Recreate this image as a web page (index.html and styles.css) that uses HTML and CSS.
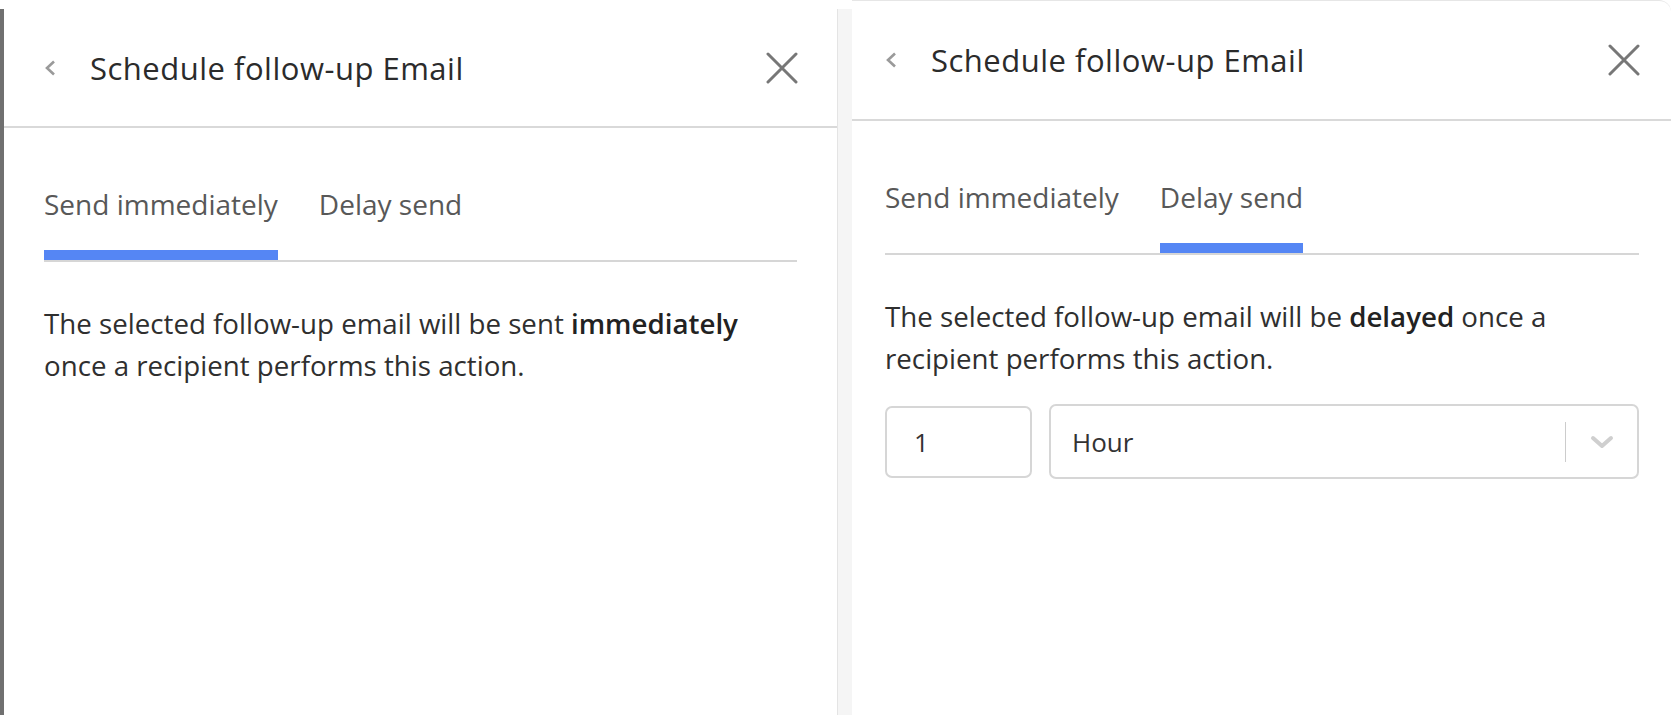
FILE: index.html
```html
<!DOCTYPE html>
<html lang="en">
<head>
<meta charset="utf-8">
<title>Schedule follow-up Email</title>
<link rel="stylesheet" href="styles.css">
</head>
<body>
<div class="desk">
  <section class="panel panel--first">
    <header class="panel-head">
      <button class="icon-btn back" aria-label="Back">
        <svg viewBox="0 0 12 16" width="12" height="16"><polyline points="10,1.5 3,8 10,14.5" fill="none" stroke="#9a9a9a" stroke-width="2.6"/></svg>
      </button>
      <h1 class="panel-title">Schedule follow-up Email</h1>
      <button class="icon-btn close" aria-label="Close">
        <svg viewBox="0 0 32 32" width="32" height="32"><path d="M2 2L30 30M30 2L2 30" stroke="#777" stroke-width="3" stroke-linecap="round"/></svg>
      </button>
    </header>
    <div class="panel-body">
      <nav class="tabs">
        <span class="tab is-active">Send immediately</span>
        <span class="tab">Delay send</span>
      </nav>
      <p class="note">The selected follow-up email will be sent <b>immediately</b> once a recipient performs this action.</p>
    </div>
  </section>

  <div class="gutter"></div>

  <section class="panel panel--second">
    <header class="panel-head">
      <button class="icon-btn back" aria-label="Back">
        <svg viewBox="0 0 12 16" width="12" height="16"><polyline points="10,1.5 3,8 10,14.5" fill="none" stroke="#9a9a9a" stroke-width="2.6"/></svg>
      </button>
      <h1 class="panel-title">Schedule follow-up Email</h1>
      <button class="icon-btn close" aria-label="Close">
        <svg viewBox="0 0 32 32" width="32" height="32"><path d="M2 2L30 30M30 2L2 30" stroke="#777" stroke-width="3" stroke-linecap="round"/></svg>
      </button>
    </header>
    <div class="panel-body">
      <nav class="tabs">
        <span class="tab">Send immediately</span>
        <span class="tab is-active">Delay send</span>
      </nav>
      <p class="note">The selected follow-up email will be <b>delayed</b> once a recipient performs this action.</p>
      <div class="delay-row">
        <div class="field field--num">1</div>
        <div class="field field--select">
          <span class="select-value">Hour</span>
          <span class="select-sep"></span>
          <svg class="select-caret" viewBox="0 0 24 14" width="24" height="14"><polyline points="3,3 12,11 21,3" fill="none" stroke="#cfcfcf" stroke-width="4" stroke-linecap="round" stroke-linejoin="round"/></svg>
        </div>
      </div>
    </div>
  </section>
</div>
</body>
</html>
```

FILE: styles.css
```css
* { box-sizing: border-box; }

html, body {
  margin: 0;
  padding: 0;
  background: #fff;
}

body {
  font-family: "Open Sans", "Noto Sans", sans-serif;
  color: #2f2f2f;
}

.desk {
  display: flex;
  height: 715px;
  overflow: hidden;
}

.panel {
  background: #fff;
  display: flex;
  flex-direction: column;
}

.panel--first {
  width: 837px;
  margin-top: 9px;
  border-left: 4px solid #707070;
  border-top-right-radius: 12px;
}

.gutter {
  width: 15px;
  margin-top: 9px;
  background: #f5f5f5;
  border-left: 1px solid #e4e4e4;
}

.panel--second {
  flex: 1;
  border-top: 1px solid #e6e6e6;
  border-top-right-radius: 12px;
}

.panel-head {
  display: flex;
  align-items: center;
  border-bottom: 2px solid #d9d9d9;
}

.panel--first .panel-head {
  height: 119px;
  padding: 0 39px 0 40px;
}

.panel--second .panel-head {
  height: 120px;
  padding: 0 31px 0 33px;
}

.icon-btn {
  background: none;
  border: 0;
  padding: 0;
  display: flex;
  cursor: pointer;
}

.back { margin-right: 34px; }

.panel-title {
  flex: 1;
  margin: 0;
  font-size: 31px;
  font-weight: 400;
  color: #2b2b2b;
  letter-spacing: 0.5px;
}

.panel--first .panel-body { padding: 0 40px; }
.panel--second .panel-body { padding: 0 32px 0 33px; }

.tabs {
  display: flex;
  gap: 41px;
  border-bottom: 2px solid #d6d6d6;
  padding-top: 58px;
}

.tab {
  font-size: 28px;
  color: #585858;
  line-height: 36px;
  padding-bottom: 28px;
  border-bottom: 10px solid transparent;
}

.tab.is-active {
  border-bottom-color: #5586f4;
}

.note {
  margin: 41px 0 0;
  font-size: 27.7px;
  line-height: 41.5px;
  color: #2f2f2f;
}

.note b {
  font-weight: 600;
  color: #222;
}

.delay-row {
  display: flex;
  align-items: center;
  gap: 17px;
  margin-top: 25px;
}

.field {
  border: 2px solid #d6d6d6;
  border-radius: 7px;
  font-size: 26px;
  color: #333;
  display: flex;
  align-items: center;
}

.field--num {
  width: 147px;
  height: 72px;
  padding-left: 27px;
}

.field--select {
  flex: 1;
  height: 75px;
  padding: 0 23px 0 21px;
}

.select-value { flex: 1; }

.select-sep {
  width: 1px;
  height: 40px;
  background: #cccccc;
  margin-right: 24px;
}

.select-caret { display: block; }
```
